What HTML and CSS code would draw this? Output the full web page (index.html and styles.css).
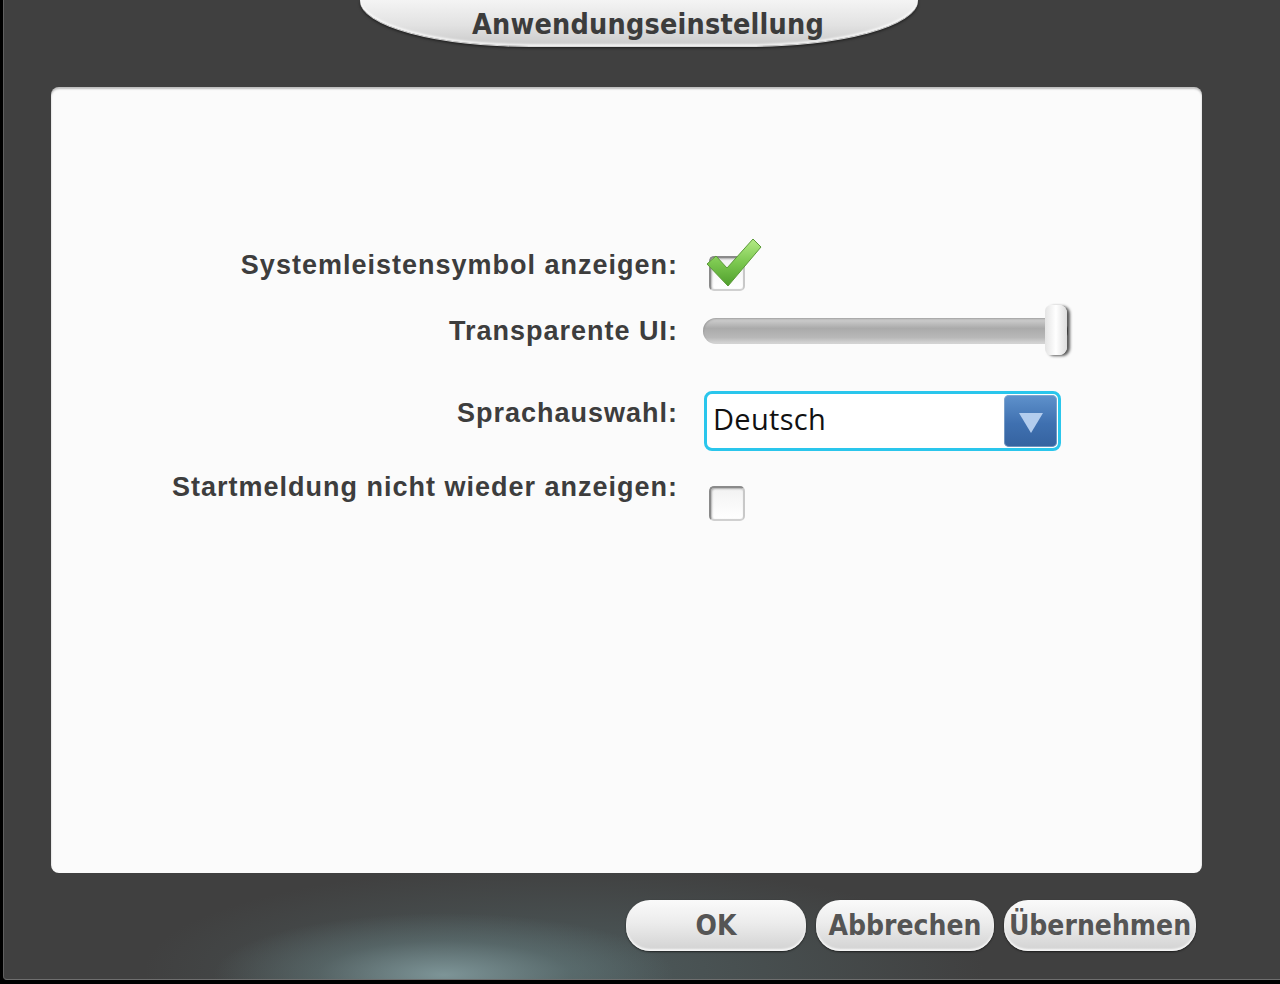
FILE: index.html
```html
<!DOCTYPE html>
<html lang="de">
<head>
    <meta charset="UTF-8">
    <meta name="viewport" content="width=device-width, initial-scale=1.0">
    <title>Anwendungseinstellung</title>
    <link rel="stylesheet" href="styles.css">
</head>
<body>
    <div class="dialog">
        <header class="titlebar">
            <div class="title-tab">Anwendungseinstellung</div>
        </header>

        <main class="panel">
            <div class="row row-tray">
                <label class="label">Systemleistensymbol anzeigen:</label>
                <div class="control">
                    <span class="checkbox">
                        <svg class="check" width="56" height="50" viewBox="0 0 56 50">
                            <defs>
                                <linearGradient id="g" x1="0" y1="0" x2="0" y2="1">
                                    <stop offset="0" stop-color="#b4ea86"/>
                                    <stop offset="0.5" stop-color="#7cc850"/>
                                    <stop offset="1" stop-color="#4f9e2c"/>
                                </linearGradient>
                            </defs>
                            <polygon points="1,26 10,18 21,30 47,1 55,9 22,48" fill="url(#g)" stroke="#5b9a38" stroke-width="1" stroke-linejoin="round"/>
                        </svg>
                    </span>
                </div>
            </div>

            <div class="row row-alpha">
                <label class="label">Transparente UI:</label>
                <div class="control">
                    <div class="slider">
                        <div class="track"></div>
                        <div class="thumb"></div>
                    </div>
                </div>
            </div>

            <div class="row row-lang">
                <label class="label">Sprachauswahl:</label>
                <div class="control">
                    <div class="select">
                        <span class="select-value">Deutsch</span>
                        <span class="select-btn"><span class="arrow"></span></span>
                    </div>
                </div>
            </div>

            <div class="row row-start">
                <label class="label">Startmeldung nicht wieder anzeigen:</label>
                <div class="control">
                    <span class="checkbox"></span>
                </div>
            </div>
        </main>

        <footer class="buttons">
            <button class="btn btn-ok">OK</button>
            <button class="btn">Abbrechen</button>
            <button class="btn">Übernehmen</button>
        </footer>
    </div>
</body>
</html>
```

FILE: styles.css
```css
body {
    margin: 0;
    background: #000;
    font-family: "Liberation Sans", Arial, sans-serif;
    color: #333;
}
.dialog {
    width: 1276px;
    height: 979px;
    margin-left: 3px;
    border-left: 1px solid #606060;
    border-bottom: 1px solid #6e6e6e;
    border-bottom-left-radius: 4px;
    background:
        radial-gradient(ellipse 230px 62px at 440px 975px, rgba(128, 152, 155, 0.95), rgba(100, 122, 124, 0.5) 55%, rgba(64, 64, 64, 0) 100%),
        radial-gradient(ellipse 420px 105px at 560px 970px, rgba(82, 100, 102, 0.75), rgba(64, 64, 64, 0) 100%),
        #404040;
    display: flex;
    flex-direction: column;
}
.titlebar {
    height: 87px;
    display: flex;
    justify-content: center;
}
.title-tab {
    width: 558px;
    height: 46px;
    box-sizing: border-box;
    padding-left: 18px;
    margin-left: -6px;
    border-radius: 0 0 170px 170px / 0 0 46px 46px;
    background: linear-gradient(#f4f4f4, #e2e2e2 55%, #c9c9c9);
    box-shadow: 0 1px 0 #d8d8d8, inset 0 -2px 2px rgba(255, 255, 255, 0.7), 0 2px 3px rgba(0, 0, 0, 0.6);
    text-align: center;
    font-family: "DejaVu Sans", sans-serif;
    font-stretch: condensed;
    font-weight: bold;
    font-size: 28.5px;
    line-height: 49px;
    color: #3c3c3c;
    letter-spacing: 0.2px;
}
.panel {
    height: 786px;
    margin-left: 47px;
    margin-right: 78px;
    box-sizing: border-box;
    padding-top: 149px;
    background: #fbfbfb;
    border-radius: 8px;
    box-shadow: inset 0 2px 2px rgba(0, 0, 0, 0.25);
    display: flex;
    flex-direction: column;
}
.row {
    display: flex;
    align-items: center;
}
.label {
    flex: none;
    width: 652px;
    padding-right: 25px;
    box-sizing: border-box;
    text-align: right;
    font-weight: bold;
    font-size: 27px;
    letter-spacing: 1px;
    line-height: 30px;
    color: #3d3d3d;
}
.row-tray {
    height: 58px;
}
.row-alpha {
    height: 62px;
    margin-top: 6px;
}
.row-lang {
    height: 66px;
    margin-top: 26px;
}
.row-lang .label {
    margin-bottom: 16px;
}
.row-start {
    height: 56px;
    margin-top: 16px;
    align-items: flex-start;
}
.row-start .label {
    margin-top: 2px;
}
.row-start .checkbox {
    margin-top: 16px;
    margin-left: 6px;
}
.checkbox {
    position: relative;
    display: block;
    width: 36px;
    height: 35px;
    box-sizing: border-box;
    border: 2px solid #8a8a8a;
    border-right-color: #c8c8c8;
    border-bottom-color: #d0d0d0;
    border-radius: 5px;
    background: linear-gradient(#f2f2f2, #ffffff);
    box-shadow: inset 1px 1px 2px rgba(0, 0, 0, 0.3);
}
.row-tray .checkbox {
    margin-left: 6px;
    margin-top: 16px;
}
.check {
    position: absolute;
    left: -5px;
    top: -20px;
}
.slider {
    position: relative;
    width: 368px;
    height: 52px;
}
.track {
    position: absolute;
    left: 0;
    top: 13px;
    width: 365px;
    height: 26px;
    border-radius: 13px;
    background: linear-gradient(#d4d4d4, #aaaaaa 40%, #b8b8b8 75%, #d8d8d8);
    box-shadow: inset 0 1px 2px rgba(0, 0, 0, 0.25);
}
.thumb {
    position: absolute;
    left: 342px;
    top: 0;
    width: 22px;
    height: 50px;
    border-radius: 6px 8px 8px 6px;
    background: linear-gradient(90deg, #e4e4e4, #ffffff 50%, #dcdcdc);
    box-shadow: 3px 1px 3px rgba(0, 0, 0, 0.65);
}
.select {
    width: 357px;
    height: 60px;
    box-sizing: border-box;
    margin-left: 1px;
    border: 3px solid #2ac6ec;
    border-radius: 8px;
    background: #fff;
    display: flex;
    align-items: center;
    padding-right: 1px;
}
.select-value {
    flex: 1;
    padding-left: 6px;
    padding-bottom: 5px;
    font-family: "Open Sans", sans-serif;
    font-size: 29px;
    color: #111;
    letter-spacing: 0.3px;
}
.select-btn {
    width: 53px;
    height: 52px;
    border-radius: 5px;
    background: linear-gradient(#5f92cc, #3f70b0 55%, #3563a0);
    box-shadow: inset 0 0 0 1px rgba(150, 180, 210, 0.6);
    display: flex;
    justify-content: center;
    align-items: center;
}
.arrow {
    width: 0;
    height: 0;
    border-left: 12px solid transparent;
    border-right: 12px solid transparent;
    border-top: 20px solid #b3cdee;
    margin-top: 3px;
}
.buttons {
    flex: 1;
    display: flex;
    justify-content: flex-end;
    align-items: flex-start;
    gap: 10px;
    padding-top: 27px;
    padding-right: 84px;
}
.btn {
    height: 51px;
    width: 178px;
    border: none;
    border-radius: 24px;
    background: linear-gradient(#fafafa, #ececec 45%, #d2d2d2);
    box-shadow: inset 0 -2px 2px rgba(255, 255, 255, 0.8), 0 1px 2px rgba(0, 0, 0, 0.6);
    font-family: "DejaVu Sans", sans-serif;
    font-stretch: condensed;
    font-weight: bold;
    font-size: 28px;
    color: #555;
    padding: 0;
    cursor: pointer;
}
.btn-ok {
    width: 180px;
}
.btn:last-child {
    width: 192px;
}
```
